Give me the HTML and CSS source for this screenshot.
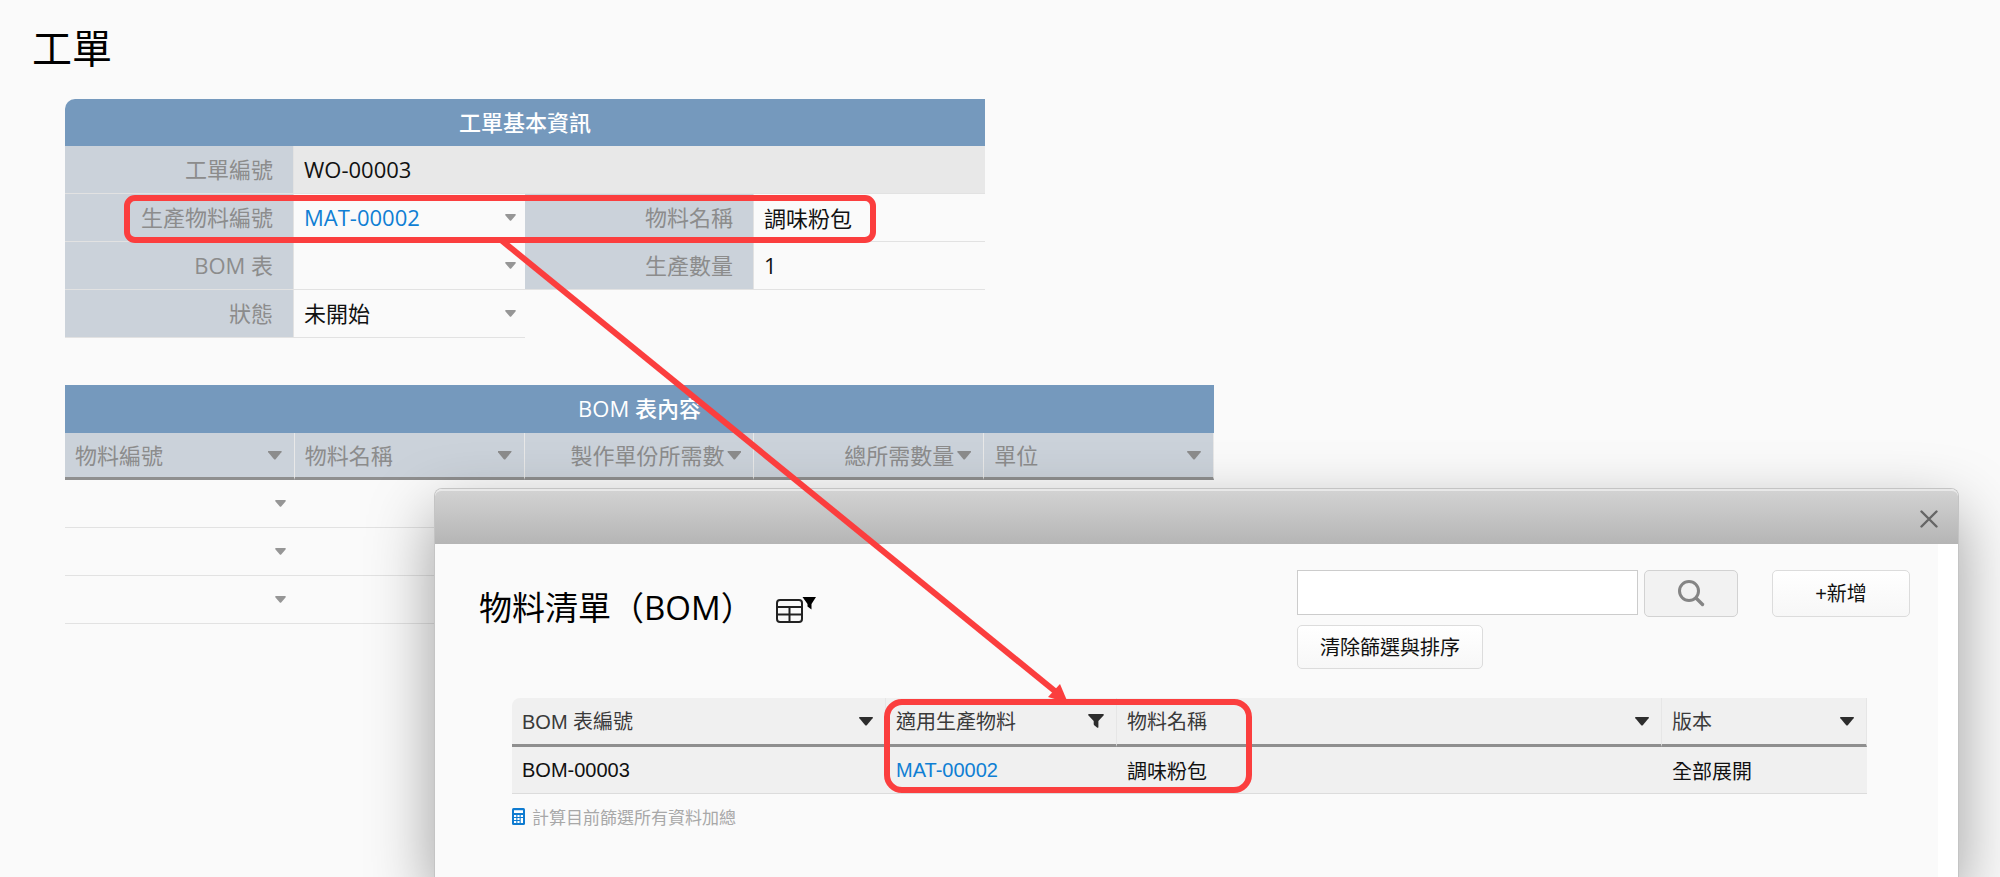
FILE: index.html
```html
<!DOCTYPE html>
<html lang="zh-Hant">
    <head>
        <meta charset="utf-8"/>
        <title>工單</title>
        <link rel="stylesheet" href="styles.css">
    </head>

    <body>
        <main class="page">
            <h1 class="page-title">工單</h1>

            <form class="order">
                <h2 class="block-title order-title">工單基本資訊</h2>

                <label class="name" for="order-no">工單編號</label>
                <input class="value wide readonly" id="order-no" type="text" value="WO-00003" readonly>

                <label class="name" for="order-mat">生產物料編號</label>
                <select class="value pick link" id="order-mat"><option>MAT-00002</option></select>
                <label class="name" for="order-mat-name">物料名稱</label>
                <input class="value" id="order-mat-name" type="text" value="調味粉包">

                <label class="name" for="order-bom">BOM 表</label>
                <select class="value pick" id="order-bom"><option></option></select>
                <label class="name" for="order-qty">生產數量</label>
                <input class="value" id="order-qty" type="text" value="1">

                <label class="name" for="order-state">狀態</label>
                <select class="value pick" id="order-state"><option>未開始</option></select>
            </form>

            <table class="items">
                <caption class="block-title">BOM 表內容</caption>
                <thead>
                    <tr>
                        <th><div class="col-head"><span>物料編號</span><button class="menu-btn" aria-label="物料編號選單"></button></div></th>
                        <th><div class="col-head"><span>物料名稱</span><button class="menu-btn" aria-label="物料名稱選單"></button></div></th>
                        <th><div class="col-head number"><span>製作單份所需數</span><button class="menu-btn" aria-label="製作單份所需數選單"></button></div></th>
                        <th><div class="col-head number"><span>總所需數量</span><button class="menu-btn" aria-label="總所需數量選單"></button></div></th>
                        <th><div class="col-head"><span>單位</span><button class="menu-btn" aria-label="單位選單"></button></div></th>
                    </tr>
                </thead>
                <tbody>
                    <tr>
                        <td><select class="pick" aria-label="物料編號"><option></option></select></td>
                        <td></td><td></td><td></td><td></td>
                    </tr>
                    <tr>
                        <td><select class="pick" aria-label="物料編號"><option></option></select></td>
                        <td></td><td></td><td></td><td></td>
                    </tr>
                    <tr>
                        <td><select class="pick" aria-label="物料編號"><option></option></select></td>
                        <td></td><td></td><td></td><td></td>
                    </tr>
                </tbody>
            </table>
        </main>

        <section class="dialog" role="dialog" aria-labelledby="dialog-title">
            <div class="dialog-bar">
                <button class="close-btn" aria-label="關閉">
                    <svg width="18" height="18" viewBox="0 0 18 18"><path d="M1.5 1.5 16.5 16.5M16.5 1.5 1.5 16.5" fill="none" stroke="#666" stroke-width="2.4" stroke-linecap="round"/></svg>
                </button>
            </div>
            <div class="dialog-body">
                <header class="dialog-head">
                    <h2 class="dialog-title" id="dialog-title">物料清單（BOM）</h2>
                    <svg class="view-icon" width="42" height="28" viewBox="0 0 42 28">
                        <rect x="2" y="4" width="25" height="22" rx="3" fill="none" stroke="#222" stroke-width="2"/>
                        <path d="M2 11H27M2 18.5H27M14.5 11V26" fill="none" stroke="#222" stroke-width="2"/>
                        <path d="M27.5 1H41L36.5 8V13.5L32.5 10.5V8Z" fill="#000"/>
                    </svg>
                    <div class="search">
                        <div class="search-row">
                            <input class="search-input" type="text" aria-label="搜尋">
                            <button class="btn search-btn" aria-label="搜尋">
                                <svg width="28" height="28" viewBox="0 0 28 28"><circle cx="12" cy="12" r="9.5" fill="none" stroke="#858585" stroke-width="3"/><path d="M19 19 25.5 25.5" stroke="#858585" stroke-width="3.4" stroke-linecap="round"/></svg>
                            </button>
                        </div>
                        <button class="btn clear-btn">清除篩選與排序</button>
                    </div>
                    <button class="btn add-btn">+新增</button>
                </header>

                <table class="list">
                    <colgroup>
                        <col class="c-no"><col class="c-mat"><col class="c-name"><col class="c-ver">
                    </colgroup>
                    <thead>
                        <tr>
                            <th><div class="col-head"><span>BOM 表編號</span><button class="menu-btn" aria-label="BOM 表編號選單"></button></div></th>
                            <th>
                                <div class="col-head"><span>適用生產物料</span>
                                    <button class="filter-btn" aria-label="篩選適用生產物料">
                                        <svg width="16" height="14" viewBox="0 0 16 14"><path d="M1 0H15Q16.4 .4 15.5 1.6L10.4 7V13.2Q10 14.2 9 13.6L6.2 11.2Q5.7 10.8 5.7 10V7L.5 1.6Q-.4 .4 1 0Z" fill="#2d2d2d"/></svg>
                                    </button>
                                </div>
                            </th>
                            <th><div class="col-head"><span>物料名稱</span><button class="menu-btn" aria-label="物料名稱選單"></button></div></th>
                            <th><div class="col-head"><span>版本</span><button class="menu-btn" aria-label="版本選單"></button></div></th>
                        </tr>
                    </thead>
                    <tbody>
                        <tr>
                            <td>BOM-00003</td>
                            <td><a class="link" href="#mat-00002">MAT-00002</a></td>
                            <td>調味粉包</td>
                            <td>全部展開</td>
                        </tr>
                    </tbody>
                </table>

                <button class="sum-btn">
                    <svg width="13" height="17" viewBox="0 0 13 17">
                        <rect width="13" height="17" rx="1.5" fill="#0f7bd0"/>
                        <path d="M2 2.2H11V5H2ZM2 7H4.3V9H2ZM5.4 7H7.6V9H5.4ZM8.7 7H11V9H8.7ZM2 10H4.3V12H2ZM5.4 10H7.6V12H5.4ZM8.7 10H11V15H8.7ZM2 13H4.3V15H2ZM5.4 13H7.6V15H5.4Z" fill="#fff"/>
                    </svg>
                    <span>計算目前篩選所有資料加總</span>
                </button>
            </div>
        </section>

        <!-- 紅色標註 -->
        <svg class="marks" width="1300" height="820" viewBox="0 0 1300 820" aria-hidden="true">
            <rect x="127" y="198" width="746" height="42" rx="8"/>
            <rect x="887" y="702" width="362" height="88" rx="15"/>
            <path d="M501 240 1056 692"/>
            <path class="marks-head" d="M1068 703 1048 697 1060 684Z"/>
        </svg>
    </body>
</html>
```

FILE: styles.css
```css
* { box-sizing: border-box; }
body {
    margin: 0; min-height: 100vh; position: relative; overflow: hidden;
    background-color: #fafafa; color: #111;
    font-family: "Open Sans", "Noto Sans CJK TC", sans-serif; font-size: 22px;
}
h1, h2 { margin: 0; font-weight: normal; }
button, input, select {
    margin: 0; padding: 0; border: 0; border-radius: 0;
    background-color: transparent; color: inherit; font: inherit;
}
button { cursor: pointer; }
table { border-collapse: separate; border-spacing: 0; table-layout: fixed; }
th, td { padding: 0; text-align: left; font-weight: normal; }
a { text-decoration: none; }
.link { color: #0f7fd4; }

/* 底層表單 */
.page { padding: 18px 65px; }
.page-title { margin: 0 0 21px -33px; font-size: 40px; line-height: 60px; color: #000; }
.block-title {
    height: 48px; line-height: 47px; text-align: center;
    background-color: #7599bd; color: #fff; font-size: 22px; font-weight: 500;
}
.order {
    display: grid; grid-template-columns: 228fr 232fr 228fr 232fr; grid-template-rows: 47px; grid-auto-rows: 48px;
    max-width: 920px; margin-bottom: 47px;
}
.order-title { grid-column: 1 / -1; height: auto; border-top-left-radius: 10px; }
.name {
    padding-right: 20px; line-height: 46px; text-align: right;
    background-color: #cbd2da; color: #8c8c8c; border-bottom: 1px solid #e2e2e2;
}
.value {
    min-width: 0; width: 100%; padding: 0 0 2px 10px;
    border-left: 1px solid #e2e2e2; border-bottom: 1px solid #e2e2e2;
}
.wide { grid-column: span 3; }
.readonly { background-color: #e8e8e8; }
.pick {
    appearance: none;
    background-image: url("data:image/svg+xml,%3Csvg xmlns='http://www.w3.org/2000/svg' viewBox='0 0 11 7'%3E%3Cpath d='M1 0H10Q11.4.4 10.5 1.4L6.2 6.4Q5.5 7.2 4.8 6.4L.5 1.4Q-.4.4 1 0Z' fill='%23969696'/%3E%3C/svg%3E");
    background-repeat: no-repeat; background-position: right 9px center; background-size: 11px 7px;
}

/* BOM 表內容 */
.items { width: 100%; max-width: 1149px; }
.items th {
    height: 47px; border-right: 1px solid #e8e8e8; border-bottom: 3px solid #8f8f8f;
    background-color: #cbd2da; color: #8c8c8c;
}
.items td { height: 48px; border-bottom: 1px solid #e2e2e2; }
.items .pick { display: block; width: 100%; height: 47px; }
.col-head { display: flex; align-items: center; justify-content: space-between; padding: 0 12px 0 10px; white-space: nowrap; }
.col-head span { padding-bottom: 2px; }
.col-head.number { justify-content: flex-end; gap: 3px; }
.menu-btn {
    width: 14px; height: 9px; flex: none; background-color: currentColor;
    clip-path: path("M1 0H13Q14.6 .4 13.6 1.8L8 8.4Q7 9.4 6 8.4L.4 1.8Q-.6 .4 1 0Z");
}

/* 彈出視窗 */
.dialog {
    position: absolute; top: 488px; left: 434px; right: 41px; bottom: 0;
    display: flex; flex-direction: column;
    border: 1px solid #c4c4c4; border-bottom: 0; border-radius: 8px 8px 0 0;
    background-color: #fff; box-shadow: 0 25px 65px rgba(0, 0, 0, .38);
    font-family: "Liberation Sans", "Noto Sans CJK TC", sans-serif; font-size: 20px;
}
.dialog-bar {
    display: flex; align-items: center; justify-content: flex-end; height: 55px; padding: 2px 20px 0 0;
    border-top: 2px solid #e8e8e8; border-radius: 7px 7px 0 0;
    background-image: linear-gradient(#d2d2d2, #b5b5b5);
}
.close-btn { display: flex; }
.dialog-body { flex: 1; margin-right: 20px; padding: 26px 28px 0 44px; background-color: #fafafa; }
.dialog-head { display: flex; align-items: flex-start; }
.dialog-title { margin-top: 10px; line-height: 56px; font-family: "Open Sans", "Noto Sans CJK TC", sans-serif; font-size: 33px; color: #000; }
.view-icon { margin: 26px auto 0 21px; }
.search { margin-right: 34px; }
.search-row { display: flex; gap: 6px; margin-bottom: 8px; }
.search-input { width: 341px; height: 45px; padding: 0 10px; border: 1px solid #ccc; background-color: #fff; }
.btn {
    display: flex; align-items: center; justify-content: center; height: 47px; padding-bottom: 2px;
    border: 1px solid #dcdcdc; border-radius: 5px; background-image: linear-gradient(#fff, #f7f7f7);
}
.search-btn { width: 94px; border-color: #d2d2d2; background-image: none; background-color: #f2f2f2; }
.clear-btn { width: 186px; height: 44px; }
.add-btn { width: 138px; }

.list { width: calc(100% - 76px); margin: 29px 0 0 33px; }
.c-no { width: 374px; }
.c-mat { width: 231px; }
.c-ver { width: 205px; }
.list th { height: 49px; border-right: 1px solid #e6e6e6; border-bottom: 3px solid #8f8f8f; background-color: #f0f0f0; color: #3a3a3a; }
.list th:first-child { border-top-left-radius: 8px; }
.list td { height: 47px; padding-left: 10px; border-bottom: 1px solid #dcdcdc; background-color: #f0f0f0; }
.list .menu-btn { color: #2d2d2d; }
.filter-btn { display: flex; }
.sum-btn { display: flex; align-items: center; gap: 7px; margin: 10px 0 0 33px; font-size: 17px; color: #a8a8a8; }

.marks { position: absolute; top: 0; left: 0; fill: none; stroke: #fb3e3e; stroke-width: 6px; pointer-events: none; }
.marks-head { fill: #fb3e3e; stroke: none; }
```
